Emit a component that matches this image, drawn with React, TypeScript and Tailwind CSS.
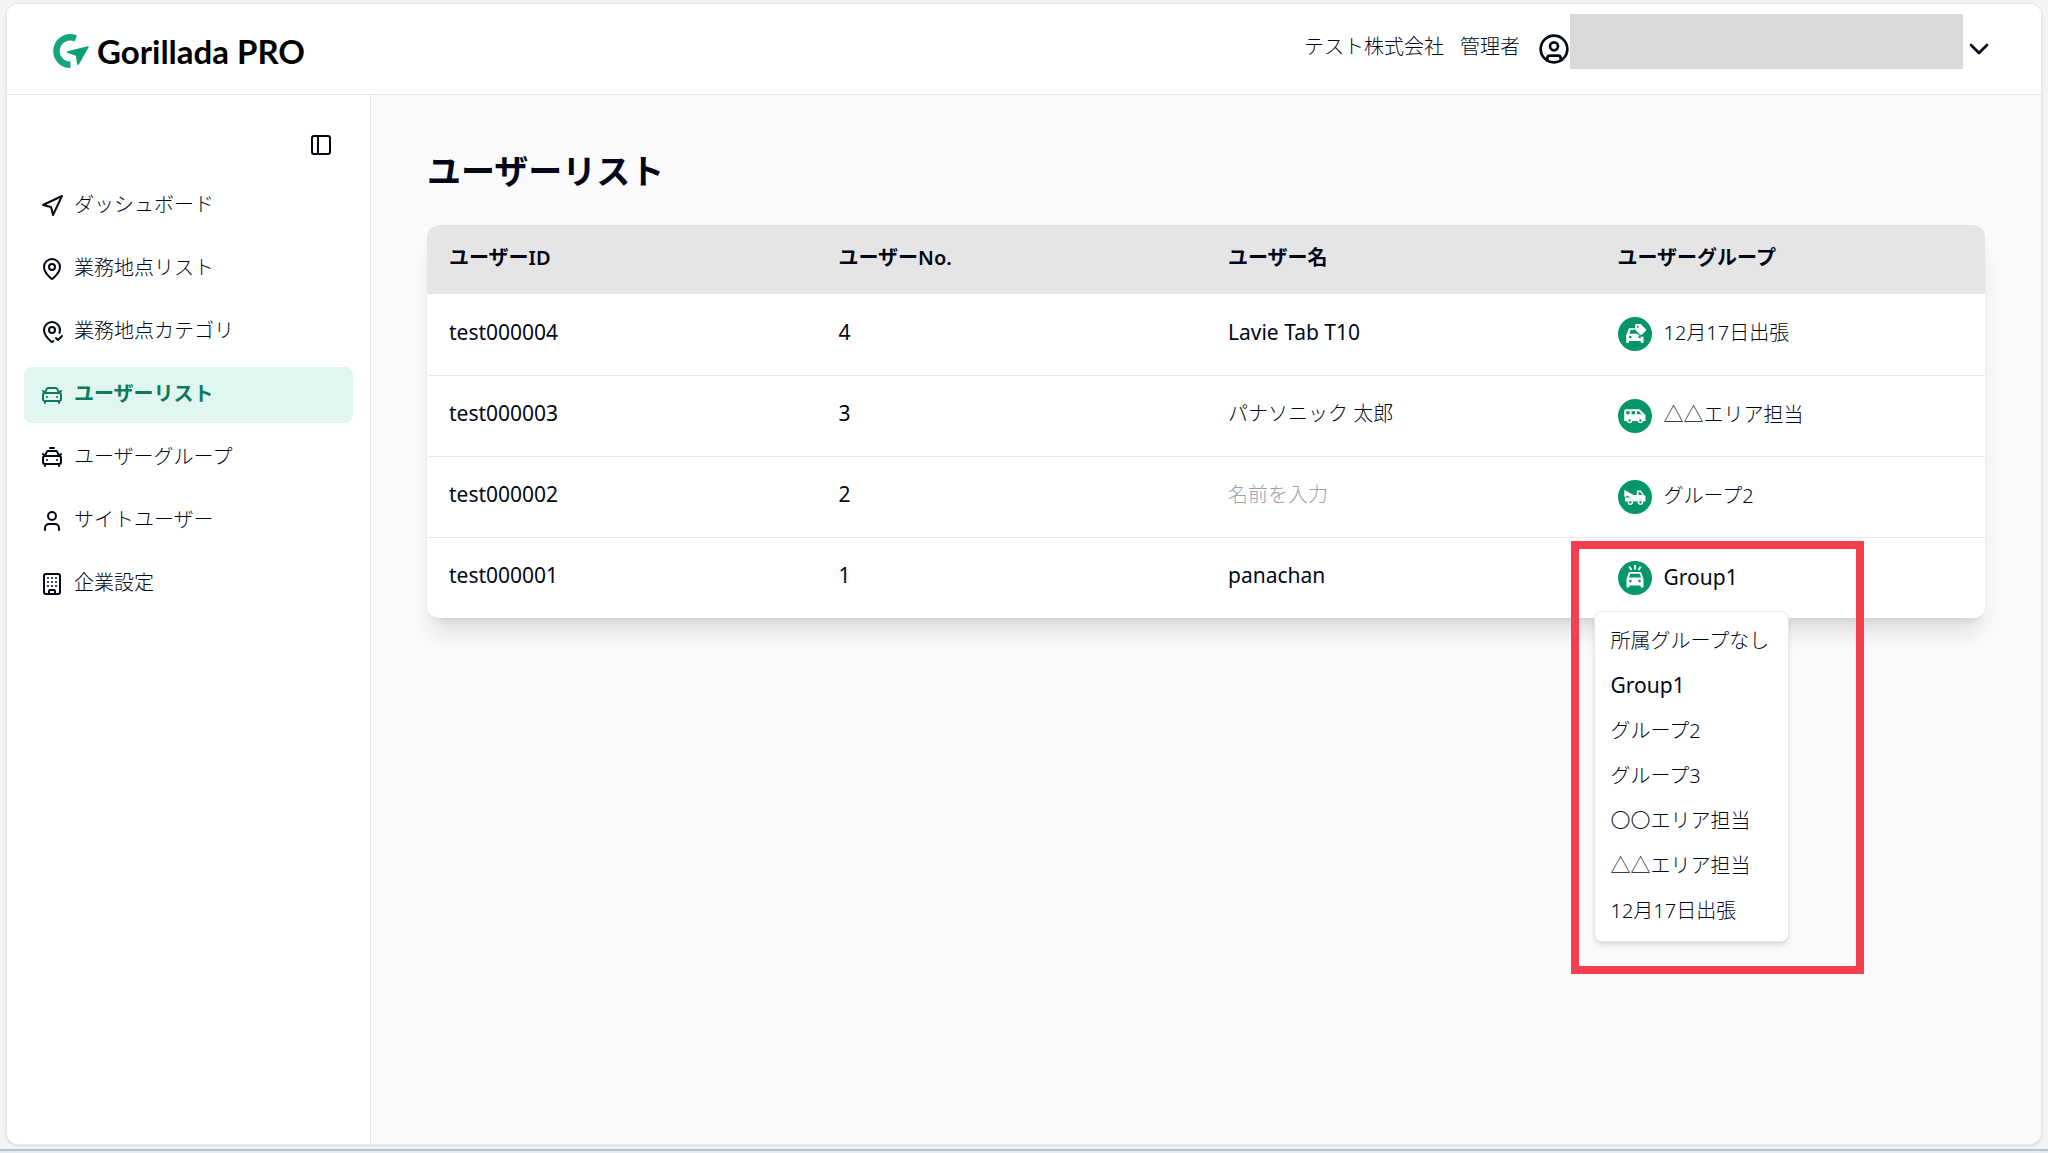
import { Navigation, MapPin, MapPinCheck, CarFront, CarTaxiFront, User, Building, PanelLeft, CircleUser, ChevronDown } from "lucide-react";

const nav = [
  { label: "ダッシュボード", Icon: Navigation },
  { label: "業務地点リスト", Icon: MapPin },
  { label: "業務地点カテゴリ", Icon: MapPinCheck },
  { label: "ユーザーリスト", Icon: CarFront, active: true },
  { label: "ユーザーグループ", Icon: CarTaxiFront },
  { label: "サイトユーザー", Icon: User },
  { label: "企業設定", Icon: Building },
];

function CarTagIcon() {
  return (
    <svg viewBox="0 0 34 34" className="size-full" aria-hidden="true">
      <path fill="#fff" fillRule="evenodd" d="M10.5 12.200c.3-.8.9-1.200 1.700-1.200h6v1.700h-5.600l-1.200 4h8l3.600 3h2.600V25c0 .6-.4 1-1 1h-.8c-.6 0-1-.4-1-1v-1H11v1c0 .6-.4 1-1 1h-.8c-.6 0-1-.4-1-1v-6.800zM12.300 18.700a1.300 1.300 0 1 0 0 2.600 1.300 1.300 0 0 0 0-2.600zM21.700 18.700a1.300 1.300 0 1 0 0 2.600 1.300 1.300 0 0 0 0-2.600z" />
      <path fill="#fff" stroke="#059669" strokeWidth="1.200" fillRule="evenodd" paintOrder="stroke" d="M18 7h4.200c.4 0 .7.1 1 .4l4.600 4.600c.5.500.5 1.200 0 1.700l-4 4c-.5.500-1.200.500-1.700 0l-4.600-4.600a1.400 1.400 0 0 1-.4-1V8c0-.6.4-1 .9-1z" />
      <circle cx="19.900" cy="9.800" r="1" fill="#059669" />
    </svg>
  );
}

function VanIcon() {
  return (
    <svg viewBox="0 0 34 34" className="size-full" aria-hidden="true">
      <path fill="#fff" fillRule="evenodd" d="M8 10.200h13.500l6 5.800v6h-2.200a3 3 0 0 1-5.800 0h-5a3 3 0 0 1-5.800 0H6.200V12c0-1.100.7-1.800 1.800-1.800zM8.200 12.300v3h3.400v-3zM13.600 12.300v3H17v-3zM19 12.300v3h4.600l-2.800-3z" />
      <circle cx="11.600" cy="21.500" r="1.200" fill="#059669" />
      <circle cx="22.400" cy="21.500" r="1.200" fill="#059669" />
    </svg>
  );
}

function TowTruckIcon() {
  return (
    <svg viewBox="0 0 34 34" className="size-full" aria-hidden="true">
      <path fill="#fff" fillRule="evenodd" d="M6.300 10l9.500 5h3v-4.500h4.200l3 4.500 1.500 1v5.500h-2.200a3 3 0 0 0-5.700 0h-4.400a3 3 0 0 0-5.700 0H7v-4h5.500l-4.200-2.300v1.600h-2zM20.600 12.100V15h3.700l-1.900-2.900z" />
      <circle cx="12.300" cy="22.200" r="2" fill="#059669" stroke="#fff" strokeWidth="1.400" />
      <circle cx="22.500" cy="22.200" r="2" fill="#059669" stroke="#fff" strokeWidth="1.400" />
    </svg>
  );
}

function EmergencyCarIcon() {
  return (
    <svg viewBox="0 0 34 34" className="size-full" aria-hidden="true">
      <path fill="none" stroke="#fff" strokeWidth="1.900" d="M17 4v4.500M11.200 5.500l2.300 3.600M22.800 5.500l-2.300 3.600" />
      <path fill="#fff" fillRule="evenodd" d="M12 11h10c.7 0 1.200.4 1.400 1l2.100 6v7.500c0 .5-.4 1-1 1h-.9c-.6 0-1-.5-1-1v-1.100H11.400v1.100c0 .5-.4 1-1 1h-.9c-.6 0-1-.5-1-1V18l2.100-6c.2-.6.700-1 1.400-1zM12.200 12.700L11 16.500h12l-1.200-3.800zM12.400 18.800a1.300 1.300 0 1 0 0 2.600 1.300 1.300 0 0 0 0-2.600zM21.600 18.800a1.300 1.300 0 1 0 0 2.600 1.300 1.300 0 0 0 0-2.600z" />
    </svg>
  );
}

const users = [
  { id: "test000004", no: "4", name: "Lavie Tab T10", group: "12月17日出張", Icon: CarTagIcon },
  { id: "test000003", no: "3", name: "パナソニック 太郎", group: "△△エリア担当", Icon: VanIcon },
  { id: "test000002", no: "2", name: "", group: "グループ2", Icon: TowTruckIcon },
  { id: "test000001", no: "1", name: "panachan", group: "Group1", Icon: EmergencyCarIcon, open: true },
];

const options = ["所属グループなし", "Group1", "グループ2", "グループ3", "〇〇エリア担当", "△△エリア担当", "12月17日出張"];

// Latin-only strings are set slightly larger and heavier than Japanese ones.
function textStyle(text: string) {
  return /^[\x20-\x7e]+$/.test(text) ? "text-[21px] font-normal" : "text-xl font-light";
}

function Logo() {
  return (
    <a href="#" className="flex items-center gap-2 pt-1 text-black" aria-label="Gorillada PRO">
      <svg viewBox="0 0 38 34" className="h-[34px] w-[38px]" aria-hidden="true">
        <path fill="none" stroke="#14a682" strokeWidth="6.500" d="M24.800 4.500A13.700 13.700 0 1 0 19.500 30.700" />
        <path fill="#0d9f78" d="M16.500 17.200L36.500 12.200c1-.2 1.500.5 1 1.300L27.800 30.400c-.5.800-1.400.600-1.600-.3l-1.400-8.300-8.200-2.800c-1-.4-1-1.500-.1-1.800z" />
      </svg>
      <span className="font-[Lato] text-[33px] leading-9 font-bold">Gorillada PRO</span>
    </a>
  );
}

function GroupMenu() {
  return (
    <div className="absolute top-full -left-6 z-10 mt-4">
      <div className="pointer-events-none absolute -top-[70px] -left-[23px] h-[433px] w-[293px] border-8 border-[#f63f4e]" />
      <ul role="listbox" aria-label="ユーザーグループ" className="relative w-[195px] rounded-lg border border-gray-200 bg-white pt-1.5 pb-2 shadow-md">
        {options.map((o) => (
          <li key={o} role="option" aria-selected={o === "Group1"} className="px-4 py-2 whitespace-nowrap">
            <span className={`block leading-[29px] ${textStyle(o)}`}>{o}</span>
          </li>
        ))}
      </ul>
    </div>
  );
}

export default function App() {
  return (
    <div className="flex min-h-screen flex-col bg-[#f5f5f5] font-['Noto_Sans','Noto_Sans_CJK_JP',sans-serif] text-xl text-[#020817]">
      <div className="mx-[6px] mt-[3px] mb-1 flex grow flex-col overflow-hidden rounded-xl border border-[#e8e8e8] bg-[#fafafa] shadow-sm">
        <header className="flex h-[91px] items-center justify-between border-b border-gray-200 bg-white pr-[46px] pl-11">
          <Logo />
          <div className="flex h-full items-center">
            <span className="mr-4 pb-1 font-light">テスト株式会社</span>
            <span className="mr-[18px] pb-1 font-light">管理者</span>
            <CircleUser className="size-8" />
            <div className="mt-[10px] h-[55px] w-[393px] self-start bg-[#d9d9d9]" />
            <button type="button" aria-label="アカウントメニュー">
              <ChevronDown className="size-8" />
            </button>
          </div>
        </header>
        <div className="flex grow">
          <aside className="w-[364px] shrink-0 border-r border-gray-200 bg-white px-[17px] pt-[38px]">
            <div className="flex justify-end pr-5">
              <button type="button" aria-label="サイドバー切替">
                <PanelLeft className="size-6" />
              </button>
            </div>
            <nav className="mt-[21px] flex flex-col gap-[7px]">
              {nav.map(({ label, Icon, active }) => (
                <a key={label} href="#" className={active ? "flex h-14 items-center gap-2.5 rounded-lg bg-[#e2f6f1] px-4 font-bold text-[#0d7a5c]" : "flex h-14 items-center gap-2.5 px-4 font-light"}>
                  <Icon className="size-6" strokeWidth={2} />
                  <span className="pb-0.5">{label}</span>
                </a>
              ))}
            </nav>
          </aside>
          <main className="grow px-14 pt-14">
            <h1 className="text-[34px] leading-10 font-bold">ユーザーリスト</h1>
            <div className="mt-[34px] rounded-xl bg-white shadow-xl">
              <table className="w-full table-fixed text-left">
                <thead>
                  <tr className="h-[69px]">
                    <th scope="col" className="rounded-tl-xl bg-[#e5e5e5] px-[22px] pb-1 font-semibold">ユーザーID</th>
                    <th scope="col" className="bg-[#e5e5e5] px-[22px] pb-1 font-semibold">ユーザーNo.</th>
                    <th scope="col" className="bg-[#e5e5e5] px-[22px] pb-1 font-semibold">ユーザー名</th>
                    <th scope="col" className="rounded-tr-xl bg-[#e5e5e5] px-[22px] pb-1 font-semibold">ユーザーグループ</th>
                  </tr>
                </thead>
                <tbody className="divide-y divide-gray-200">
                  {users.map(({ id, no, name, group, Icon, open }) => (
                    <tr key={id} className="h-[81px]">
                      <td className="px-[22px] pb-1 text-[21px]">{id}</td>
                      <td className="px-[22px] pb-1 text-[21px]">{no}</td>
                      <td className="px-[22px] pb-1">
                        <input aria-label={`${id} ユーザー名`} defaultValue={name} placeholder="名前を入力" className={`w-full bg-transparent placeholder:text-gray-400 ${textStyle(name)}`} />
                      </td>
                      <td className="px-[22px]">
                        <div className="relative">
                          <button type="button" aria-haspopup="listbox" aria-expanded={!!open} className="flex items-center gap-3">
                            <span className="size-[34px] rounded-full bg-[#059669]">
                              <Icon />
                            </span>
                            <span className={`pb-0.5 leading-7 ${textStyle(group)}`}>{group}</span>
                          </button>
                          {open && <GroupMenu />}
                        </div>
                      </td>
                    </tr>
                  ))}
                </tbody>
              </table>
            </div>
          </main>
        </div>
      </div>
      <footer className="h-1 border-t-2 border-[#b7c3cd] bg-[#e3eaf1]" />
    </div>
  );
}
